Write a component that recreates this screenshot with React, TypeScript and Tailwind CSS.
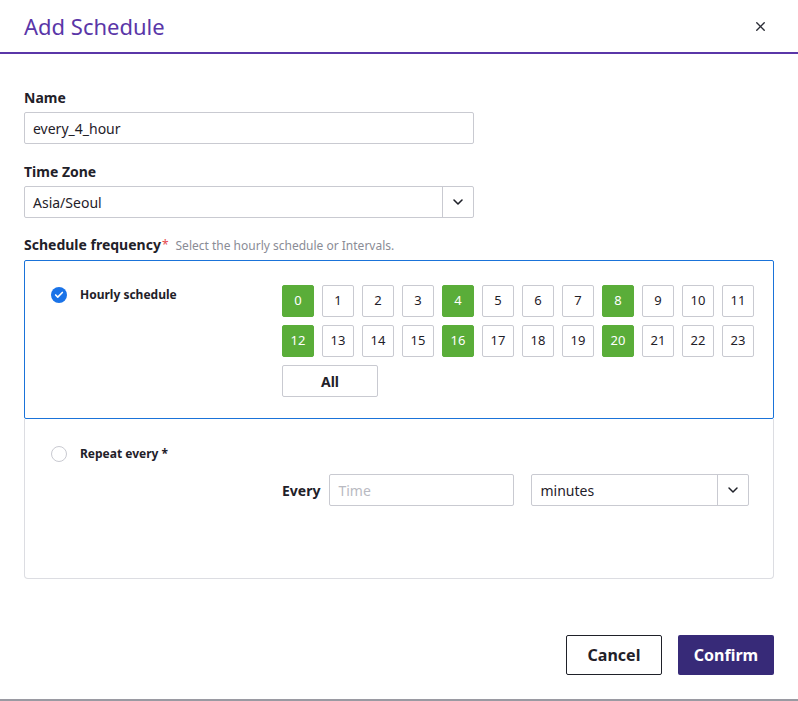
import React, { useState } from 'react';
import { X, ChevronDown, Check } from 'lucide-react';

const HOURS = Array.from({ length: 24 }, (_, i) => i);

export default function App() {
  const [selected, setSelected] = useState<number[]>([0, 4, 8, 12, 16, 20]);

  const toggle = (h: number) =>
    setSelected((s) => (s.includes(h) ? s.filter((x) => x !== h) : [...s, h]));

  return (
    <div className="w-[798px] h-[701px] bg-white flex flex-col font-['Noto_Sans',sans-serif] text-[#1f2129]">
      {/* Header */}
      <div className="h-[54px] flex items-center justify-between pl-6 pr-[30px] border-b-2 border-[#5a36a8]">
        <h2 className="text-[22px] text-[#5a36a8] leading-none">Add Schedule</h2>
        <button className="text-[#2b2d36]">
          <X className="w-[15px] h-[15px]" strokeWidth={2.2} />
        </button>
      </div>

      <div className="flex-1 flex flex-col px-6 pt-[34px]">
        {/* Name */}
        <label className="text-[14px] font-bold leading-5">Name</label>
        <input
          className="mt-[4px] w-[450px] h-[32px] border border-[#c9cad1] rounded-[2px] px-2 text-[14px] outline-none"
          defaultValue="every_4_hour"
        />

        {/* Time Zone */}
        <label className="mt-[18px] text-[14px] font-bold leading-5">Time Zone</label>
        <div className="mt-[4px] w-[450px] h-[32px] border border-[#c9cad1] rounded-[2px] flex items-center">
          <span className="flex-1 px-2 text-[14px]">Asia/Seoul</span>
          <span className="w-[31px] h-full border-l border-[#c9cad1] flex items-center justify-center">
            <ChevronDown className="w-4 h-4" strokeWidth={2.4} />
          </span>
        </div>

        {/* Schedule frequency */}
        <div className="mt-[17px] flex items-baseline leading-5">
          <span className="text-[14px] font-bold">Schedule frequency</span>
          <span className="text-[#e5484d] text-[12px] ml-[1px] self-start">*</span>
          <span className="ml-[7px] text-[12px] text-[#8a8c96]">Select the hourly schedule or Intervals.</span>
        </div>

        <div className="mt-[4px] w-[750px] border border-[#1a73d9] rounded-[2px] h-[159px] flex pt-[24px] pl-[26px]">
          <div className="w-[231px] flex items-start">
            <span className="w-4 h-4 rounded-full bg-[#1a73e8] flex items-center justify-center mt-[2px]">
              <Check className="w-[10px] h-[10px] text-white" strokeWidth={4} />
            </span>
            <span className="ml-[13px] text-[12px] font-bold leading-5">Hourly schedule</span>
          </div>
          <div className="flex flex-col">
            <div className="grid grid-cols-12 gap-2">
              {HOURS.map((h) => {
                const on = selected.includes(h);
                return (
                  <button
                    key={h}
                    onClick={() => toggle(h)}
                    className={
                      on
                        ? 'w-8 h-8 flex items-center justify-center rounded-[2px] bg-[#5aad39] border border-[#5aad39] text-white text-[13px]'
                        : 'w-8 h-8 flex items-center justify-center rounded-[2px] bg-white border border-[#c9cad1] text-[#1f2129] text-[13px]'
                    }
                  >
                    {h}
                  </button>
                );
              })}
            </div>
            <button className="mt-2 w-[96px] h-[32px] border border-[#c9cad1] rounded-[2px] text-[14px] font-bold">
              All
            </button>
          </div>
        </div>

        <div className="w-[750px] h-[160px] border border-t-0 border-[#dcdde2] rounded-b-[4px] flex flex-col pt-[25px] pl-[26px]">
          <div className="flex items-center">
            <span className="w-4 h-4 rounded-full border border-[#c9cad1]" />
            <span className="ml-[13px] text-[12px] font-bold leading-5">Repeat every *</span>
          </div>
          <div className="mt-[10px] ml-[231px] flex items-center">
            <span className="text-[14px] font-bold mr-[9px]">Every</span>
            <input
              placeholder="Time"
              className="w-[185px] h-[32px] border border-[#c9cad1] rounded-[2px] px-2 text-[14px] placeholder:text-[#b9bac2] outline-none"
            />
            <div className="ml-[17px] w-[218px] h-[32px] border border-[#c9cad1] rounded-[2px] flex items-center">
              <span className="flex-1 px-2 text-[14px]">minutes</span>
              <span className="w-[31px] h-full border-l border-[#c9cad1] flex items-center justify-center">
                <ChevronDown className="w-4 h-4" strokeWidth={2.2} />
              </span>
            </div>
          </div>
        </div>

        <div className="flex-1" />

        {/* Footer */}
        <div className="flex justify-end gap-4 pb-[24px]">
          <button className="w-[96px] h-[40px] border border-[#1f2129] rounded-[2px] text-[16px] font-bold">
            Cancel
          </button>
          <button className="w-[96px] h-[40px] bg-[#372a78] text-white rounded-[2px] text-[16px] font-bold">
            Confirm
          </button>
        </div>
      </div>
      <div className="h-[2px] bg-[#9a9aa2]" />
    </div>
  );
}
